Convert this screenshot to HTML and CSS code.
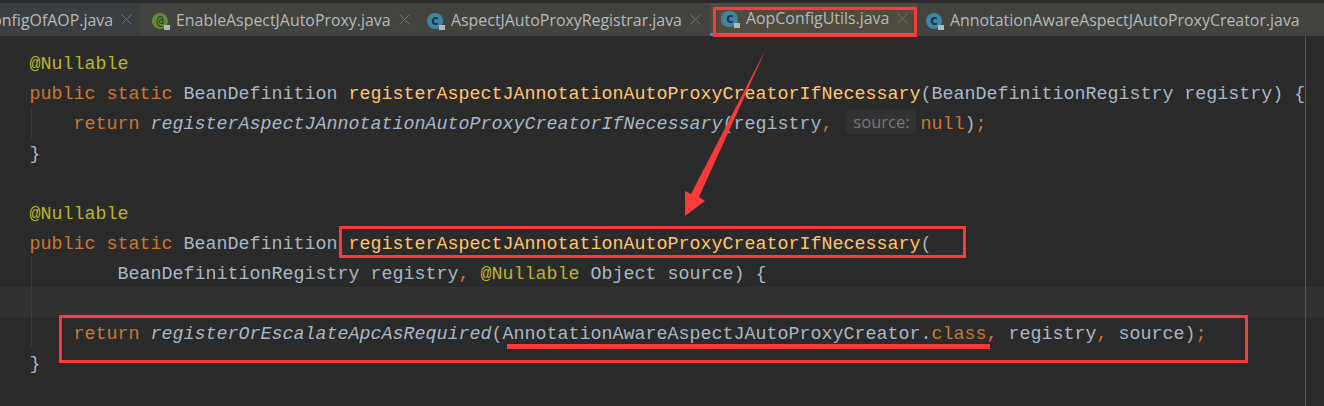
FILE: index.html
```html
<!DOCTYPE html>
<html lang="en">
<head>
<meta charset="utf-8">
<title>AopConfigUtils.java</title>
<link rel="stylesheet" href="styles.css">
</head>
<body>
<div class="window">
  <div class="tabs">
    <div class="tab tab-first"><span class="tab-name">ConfigOfAOP.java</span><svg class="close" viewBox="0 0 11 11"><path d="M.5.5l10 10M10.5.5l-10 10"/></svg></div>
    <div class="tab tab-w2 tab-light">
      <svg class="ico" viewBox="0 0 20 20"><circle cx="9" cy="11" r="8" fill="#5f8c3a"/><text x="9" y="15" class="ico-t ico-at">@</text><rect x="13" y="15" width="6" height="6" fill="#b4b8bb"/></svg>
      <span class="tab-name">EnableAspectJAutoProxy.java</span><svg class="close" viewBox="0 0 11 11"><path d="M.5.5l10 10M10.5.5l-10 10"/></svg></div>
    <div class="tab tab-w3 tab-light">
      <svg class="ico" viewBox="0 0 20 20"><circle cx="9" cy="11" r="8" fill="#3f86a6"/><text x="9" y="15" class="ico-t">c</text><rect x="13" y="15" width="6" height="6" fill="#b4b8bb"/></svg>
      <span class="tab-name">AspectJAutoProxyRegistrar.java</span><svg class="close" viewBox="0 0 11 11"><path d="M.5.5l10 10M10.5.5l-10 10"/></svg></div>
    <div class="tab tab-w4 tab-active">
      <svg class="ico" viewBox="0 0 20 20"><circle cx="7" cy="11" r="8" fill="#6a6a62"/><circle cx="9" cy="11" r="8" fill="#3f86a6"/><text x="9" y="15" class="ico-t">c</text><rect x="13" y="15" width="6" height="6" fill="#b4b8bb"/></svg>
      <span class="tab-name">AopConfigUtils.java</span><svg class="close" viewBox="0 0 11 11"><path d="M.5.5l10 10M10.5.5l-10 10"/></svg></div>
    <div class="tab tab-w5 tab-light">
      <svg class="ico" viewBox="0 0 20 20"><circle cx="9" cy="11" r="8" fill="#3f86a6"/><text x="9" y="15" class="ico-t">c</text><rect x="13" y="15" width="6" height="6" fill="#b4b8bb"/></svg>
      <span class="tab-name">AnnotationAwareAspectJAutoProxyCreator.java</span></div>
  </div>
  <div class="editor">
    <div class="margin"></div>
    <div class="guide guide-a"></div>
    <div class="guide guide-b"></div>
    <div class="line"><span class="an">@Nullable</span></div>
    <div class="line"><span class="kw">public static </span>BeanDefinition <span class="fn">registerAspectJAnnotationAutoProxyCreatorIfNecessary</span>(BeanDefinitionRegistry registry) {</div>
    <div class="line"><span class="kw">    return </span><em>registerAspectJAnnotationAutoProxyCreatorIfNecessary</em>(registry<span class="kw">,</span> <span class="hint">source:</span><span class="kw">null</span>)<span class="kw">;</span></div>
    <div class="line">}</div>
    <div class="line"> </div>
    <div class="line"><span class="an">@Nullable</span></div>
    <div class="line"><span class="kw">public static </span>BeanDefinition <span class="fn">registerAspectJAnnotationAutoProxyCreatorIfNecessary</span>(</div>
    <div class="line">        BeanDefinitionRegistry registry<span class="kw">,</span> <span class="an">@Nullable</span> Object source) {</div>
    <div class="line line-current"> </div>
    <div class="line"><span class="kw">    return </span><em>registerOrEscalateApcAsRequired</em>(AnnotationAwareAspectJAutoProxyCreator.<span class="kw">class,</span> registry<span class="kw">,</span> source)<span class="kw">;</span></div>
    <div class="line">}</div>
  </div>
  <svg class="marks" width="1324" height="406" viewBox="0 0 1324 406">
    <g fill="none" stroke="#f93b3b" stroke-width="3">
      <rect x="714.5" y="8.5" width="201" height="27"/>
      <rect x="340.5" y="227.5" width="624" height="29"/>
      <rect x="60.5" y="316.5" width="1186" height="45"/>
    </g>
    <rect x="507" y="344" width="483" height="5" fill="#f93b3b"/>
    <polygon points="766,49 699,197 705,201 685,216 685,191 691,194" fill="#f93b3b"/>
  </svg>
</div>
</body>
</html>
```
FILE: styles.css
```css
html, body { margin: 0; padding: 0; }
body { width: 1324px; height: 406px; overflow: hidden; background: #2b2b2b; }
.window { position: relative; width: 1324px; height: 406px; display: flex; flex-direction: column; overflow: hidden; }
.tabs { display: flex; height: 33px; margin-top: 3px; background: #3c3f41; font: 15.9px/33px "Open Sans", sans-serif; color: #b6babd; flex: none; }
.tab { display: flex; align-items: center; height: 33px; box-sizing: border-box; flex: none; overflow: hidden; }
.tab-first { width: 140px; justify-content: flex-end; padding-right: 8px; }
.tab-w2 { width: 275px; padding-left: 11px; }
.tab-w3 { width: 295px; padding-left: 11px; }
.tab-w4 { width: 207px; padding-left: 11px; border-bottom: 3px solid #4a88c7; }
.tab-w5 { width: 407px; padding-left: 8px; }
.tab-light { background: #43433f; }
.tab-active { background: #4f4c3e; }
.tab-name { flex: none; padding-top: 1px; }
.ico { width: 20px; height: 20px; margin-right: 5px; flex: none; }
.ico-t { font: bold 14px "DejaVu Sans Mono", monospace; fill: #1f3440; text-anchor: middle; }
.ico-at { font-size: 12px; font-weight: normal; fill: #2b3b20; }
.close { width: 11px; height: 11px; margin-left: 8px; flex: none; fill: none; stroke: #6f7173; stroke-width: 1; }
.editor { position: relative; flex: 1; padding-top: 11px; font: 18.33px/36px "Liberation Mono", monospace; color: #a9b7c6; }
.line { height: 30px; padding-left: 29.5px; white-space: pre; }
.line-current { background: #323232; }
.margin { position: absolute; left: 1305px; top: 0; bottom: 0; width: 1px; background: #555; }
.guide { position: absolute; left: 31px; width: 1px; background: #3b3b3b; }
.guide-a { top: 71px; height: 31px; }
.guide-b { top: 221px; height: 90px; }
.kw { color: #cc7832; }
.an { color: #bbb529; }
.fn { color: #ffc66d; }
em { font-style: italic; }
.hint { display: inline-block; width: 70px; height: 25px; margin: 0 4px 0 3px; background: #333333; border-radius: 4px; color: #787878; font: 16.5px/25px "Open Sans", sans-serif; letter-spacing: 0; text-align: center; vertical-align: 1px; }
.marks { position: absolute; left: 0; top: 0; pointer-events: none; }
```
